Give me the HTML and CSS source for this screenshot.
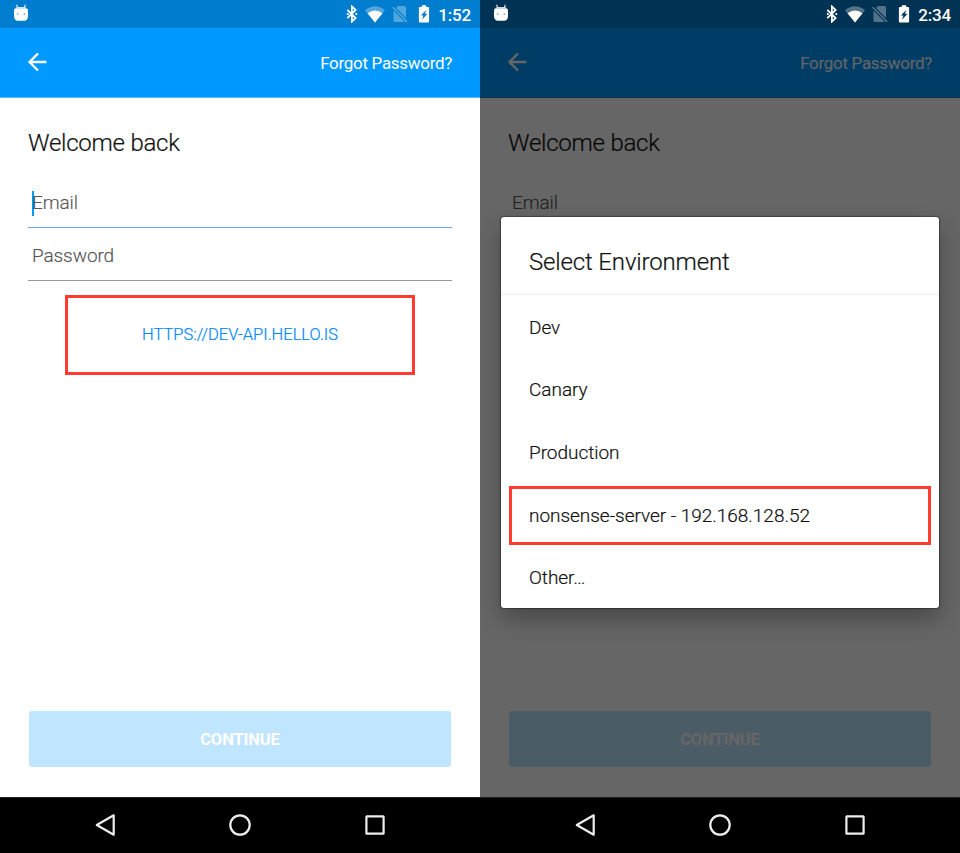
FILE: index.html
```html
<!DOCTYPE html>
<html lang="en">
<head>
<meta charset="utf-8">
<title>Sign in</title>
<link rel="stylesheet" href="styles.css">
</head>
<body>
<svg class="defs" width="0" height="0" aria-hidden="true">
  <symbol id="droid" viewBox="0 0 16 18">
    <path d="M3.6.7 4.7 4M12.4.7 11.3 4" stroke="currentColor" stroke-width="1.2" fill="none" opacity=".85"/>
    <path d="M1.2 5.5Q2.2 3 5 3h6q2.800 0 3.800 2.500z" fill="currentColor" opacity=".8"/>
    <path d="M1.300 5h13.400q.5 3.500.3 7-.1 4.700-4 4.700H5q-3.900 0-4-4.700-.2-3.500.3-7z" fill="currentColor"/>
    <circle cx="4.700" cy="10" r=".8" fill="#4b91c2"/><circle cx="11.300" cy="10" r=".8" fill="#4b91c2"/>
  </symbol>
  <symbol id="bluetooth" viewBox="0 0 12 18">
    <path d="M1.300 4.800 9.600 13.100 5.900 16.600V1.400L9.600 4.900 1.300 13.200" fill="none" stroke="currentColor" stroke-width="1.800"/>
    <circle cx="1.800" cy="9" r="1.100" fill="currentColor"/><circle cx="10.300" cy="9" r="1.100" fill="currentColor"/>
  </symbol>
  <symbol id="wifi" viewBox="0 0 20 17">
    <path d="M0 4.200Q10-3.800 20 4.200L10 16.500z" fill="currentColor" opacity=".32"/>
    <path d="M2.500 7.300Q10 1.600 17.500 7.300L10 16.500z" fill="currentColor"/>
  </symbol>
  <symbol id="nosim" viewBox="0 0 16 18">
    <path d="M6 1h6.500q1.500 0 1.500 1.500V13L4 3zM1.500 5.500 13 17H3q-1.500 0-1.500-1.500z" fill="currentColor" opacity=".32"/>
    <path d="M.6 2.200 15.200 16.800" stroke="currentColor" stroke-width="1.200" opacity=".4"/>
  </symbol>
  <symbol id="battery" viewBox="0 0 12 18">
    <path fill="currentColor" fill-rule="evenodd" d="M3.800.3h4.400V2h1.900q1 0 1 1v13.500q0 1-1 1H1.900q-1 0-1-1V3q0-1 1-1h1.900zM8.500 4.700 2.800 10.400h2.600L4 14.700l5.500-5.900H6.800z"/>
  </symbol>
  <symbol id="arrow" viewBox="0 0 20 20">
    <path d="M19.400 10H2.400M11 1.500 2.500 10l8.500 8.500" fill="none" stroke="currentColor" stroke-width="2.300"/>
  </symbol>
  <symbol id="nav-back" viewBox="0 0 24 24">
    <path d="M20.700 2.300V21.700L3.800 12z" fill="none" stroke="currentColor" stroke-width="2.200" stroke-linejoin="round"/>
  </symbol>
  <symbol id="nav-home" viewBox="0 0 24 24">
    <circle cx="12" cy="12" r="9.700" fill="none" stroke="currentColor" stroke-width="2.200"/>
  </symbol>
  <symbol id="nav-recent" viewBox="0 0 24 24">
    <rect x="3.400" y="3.400" width="17.200" height="17.200" rx=".4" fill="none" stroke="currentColor" stroke-width="2.200"/>
  </symbol>
</svg>

<main class="screens">
  <section class="phone">
    <header class="status">
      <svg class="droid"><use href="#droid"/></svg>
      <div class="indicators">
        <svg class="bluetooth"><use href="#bluetooth"/></svg>
        <svg class="wifi"><use href="#wifi"/></svg>
        <svg class="nosim"><use href="#nosim"/></svg>
        <svg class="battery"><use href="#battery"/></svg>
        <span class="clock">1:52</span>
      </div>
    </header>
    <nav class="appbar">
      <svg class="arrow"><use href="#arrow"/></svg>
      <span class="forgot">Forgot Password?</span>
    </nav>
    <div class="form">
      <h1 class="title">Welcome back</h1>
      <div class="field focused"><span class="email">Email</span></div>
      <div class="field"><span class="password">Password</span></div>
      <div class="endpoint"><span>HTTPS://DEV-API.HELLO.IS</span></div>
      <div class="continue"><span>CONTINUE</span></div>
    </div>
    <footer class="navbar">
      <svg><use href="#nav-back"/></svg>
      <svg><use href="#nav-home"/></svg>
      <svg><use href="#nav-recent"/></svg>
    </footer>
  </section>

  <section class="phone dimmed">
    <header class="status">
      <svg class="droid"><use href="#droid"/></svg>
      <div class="indicators">
        <svg class="bluetooth"><use href="#bluetooth"/></svg>
        <svg class="wifi"><use href="#wifi"/></svg>
        <svg class="nosim"><use href="#nosim"/></svg>
        <svg class="battery"><use href="#battery"/></svg>
        <span class="clock">2:34</span>
      </div>
    </header>
    <nav class="appbar">
      <svg class="arrow"><use href="#arrow"/></svg>
      <span class="forgot">Forgot Password?</span>
    </nav>
    <div class="form">
      <h1 class="title">Welcome back</h1>
      <div class="field"><span class="email">Email</span></div>
      <div class="continue"><span>CONTINUE</span></div>
    </div>
    <footer class="navbar">
      <svg><use href="#nav-back"/></svg>
      <svg><use href="#nav-home"/></svg>
      <svg><use href="#nav-recent"/></svg>
    </footer>
    <div class="scrim">
      <div class="dialog">
        <h2 class="dialog-title"><span>Select Environment</span></h2>
        <ul class="options">
          <li><span>Dev</span></li>
          <li><span>Canary</span></li>
          <li><span>Production</span></li>
          <li class="marked"><span>nonsense-server - 192.168.128.52</span></li>
          <li><span>Other…</span></li>
        </ul>
      </div>
    </div>
  </section>
</main>
</body>
</html>
```
FILE: styles.css
```css
* { box-sizing: border-box; }
body { margin: 0; font-family: Roboto, "Liberation Sans", sans-serif; color: #111; }
.defs { display: block; }
.screens { display: flex; width: 960px; height: 853px; }
.phone { position: relative; display: flex; flex-direction: column; width: 480px; height: 853px; background: #fff; overflow: hidden; }

.status { display: flex; align-items: center; justify-content: space-between; height: 28px; padding: 0 9px 0 13px; background: #007dcf; color: #fff; }
.droid { width: 16px; height: 18px; margin-bottom: 2px; }
.indicators { display: flex; align-items: center; }
.bluetooth { width: 12px; height: 18px; }
.wifi { width: 20px; height: 17px; margin-left: 7px; }
.nosim { width: 16px; height: 18px; margin-left: 7px; }
.battery { width: 12px; height: 18px; margin-left: 10px; }
.clock { margin-left: 8px; font-size: 17px; line-height: 20px; font-weight: 500; letter-spacing: -.15px; padding-top: 1px; }

.appbar { display: flex; align-items: center; justify-content: space-between; height: 70px; padding: 0 28px 0 27px; background: #0099ff; color: #fff; border-bottom: 1px solid #5abcff; }
.arrow { width: 20px; height: 20px; margin-bottom: 1px; }
.forgot { font-size: 17px; line-height: 20px; letter-spacing: -.3px; padding-top: 1px; }

.form { flex: 1; display: flex; flex-direction: column; padding: 0 28px 30px; }
.title { margin: 30px 0 31px; font-size: 24px; line-height: 30px; font-weight: 300; letter-spacing: -.24px; -webkit-text-stroke: .2px; }
.field { display: flex; height: 39px; padding: 2px 4px 0; border-bottom: 1px solid #999; color: #555; font-size: 19px; line-height: 24px; font-weight: 300; letter-spacing: -.1px; -webkit-text-stroke: .15px; }
.field + .field { height: 53px; padding-top: 16px; }
.field.focused { border-bottom-color: #6ba8f5; }
.focused::before { content: ""; width: 2px; height: 25px; margin: 0 -2px 0 0; background: #0099ff; }
.endpoint { display: flex; align-items: center; justify-content: center; width: 350px; height: 80px; margin: 14px auto 0; padding-bottom: 2px; border: 3px solid #ff3b30; color: #0088ff; font-size: 16.500px; font-weight: 300; -webkit-text-stroke: .2px; }
.continue { display: flex; align-items: center; justify-content: center; height: 56px; margin: auto 1px 0; border-radius: 3px; background: #bfe5ff; color: #fff; font-size: 16.500px; font-weight: 700; letter-spacing: -.1px; }
.navbar { display: flex; align-items: center; justify-content: center; gap: 111px; height: 56px; padding-bottom: 1px; background: #000; color: #eee; border-top: 1px solid #222; }
.navbar svg { width: 24px; height: 24px; }

.dimmed .status { position: relative; z-index: 2; background: #003253; }
.dimmed .appbar { border-color: #2878ad; }
.dimmed .navbar { position: relative; z-index: 2; }
.scrim { position: absolute; inset: 0 0 56px; z-index: 1; padding: 217px 21px 0; background: rgba(0, 0, 0, .6); }
.dialog { height: 391px; border-radius: 3px; background: #fff; box-shadow: 0 0 1px 1px rgba(0, 0, 0, .35), 0 11px 24px rgba(0, 0, 0, .3); -webkit-text-stroke: .2px; }
.dialog-title { display: flex; align-items: center; height: 78px; margin: 0; padding: 12px 28px 0; border-bottom: 1px solid #eee; font-size: 24px; font-weight: 300; letter-spacing: -.15px; }
.options { margin: 0; padding: 1px 0 0; list-style: none; }
.options li { display: flex; align-items: center; height: 62.600px; padding-left: 28px; font-size: 19px; font-weight: 300; letter-spacing: -.03px; }
.options .marked { height: 59px; margin: 2px 8px 1.600px; padding-left: 17px; border: 3px solid #ff3b30; }
```
